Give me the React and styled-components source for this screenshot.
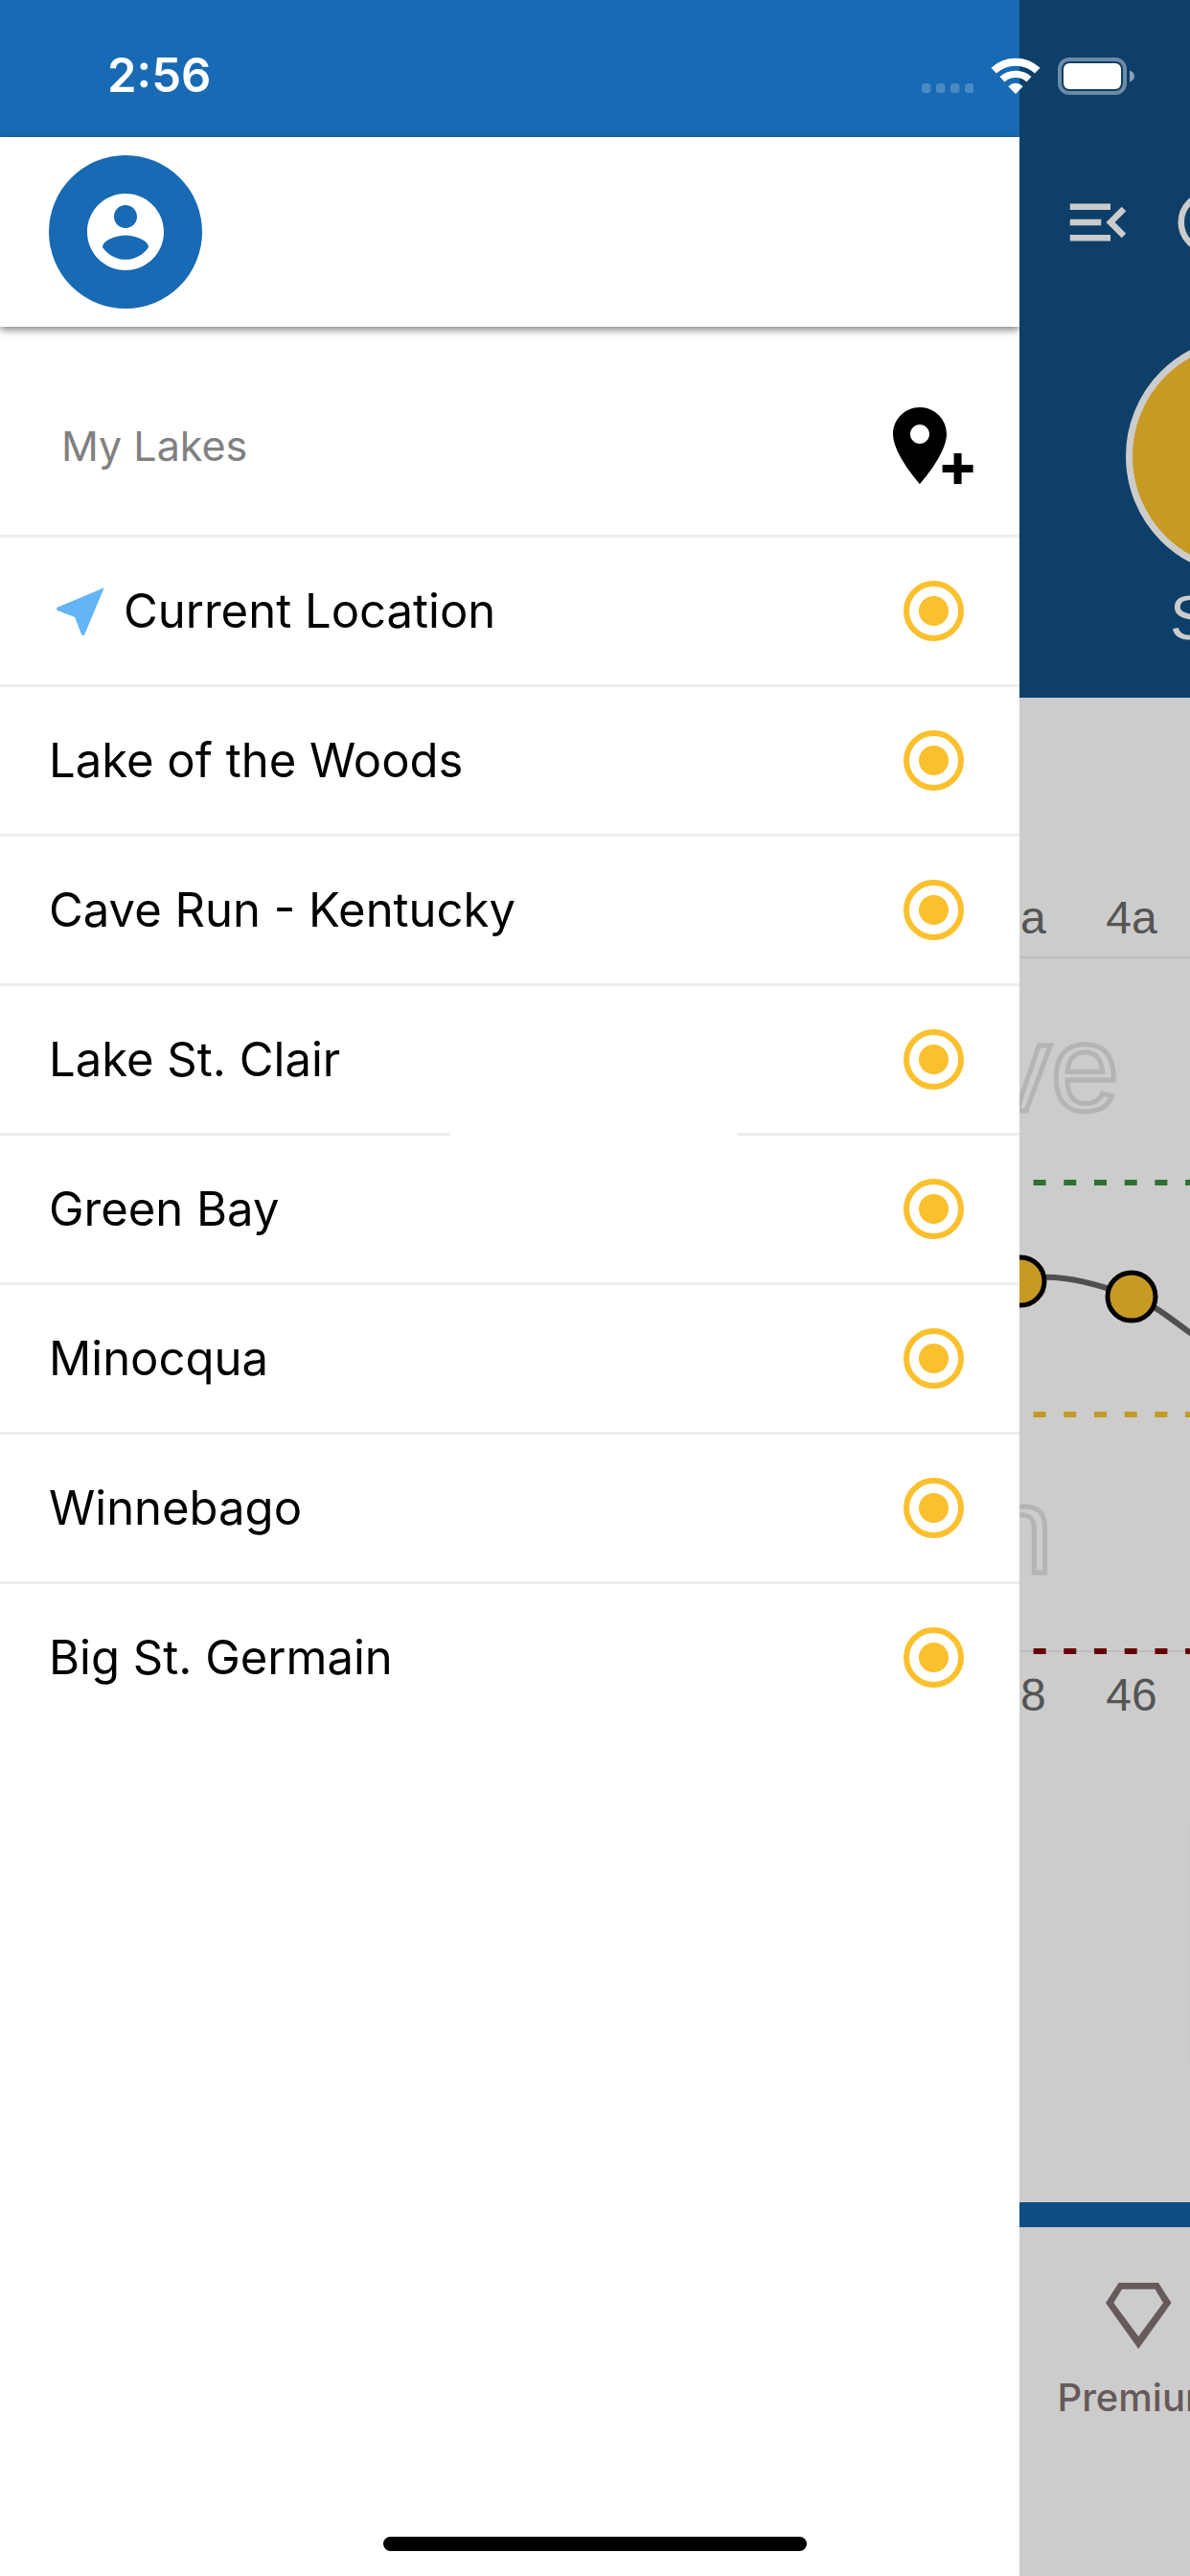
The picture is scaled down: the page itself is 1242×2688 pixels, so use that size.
import styled, { createGlobalStyle } from "styled-components";

const GlobalStyle = createGlobalStyle`
  * {
    box-sizing: border-box;
  }

  body {
    margin: 0;
    background: #ffffff;
    font-family: Inter, "Liberation Sans", sans-serif;
  }
`;

const Screen = styled.div`
  position: relative;
  display: grid;
  grid-template-columns: minmax(0, 1fr) 178px;
  min-height: 100vh;
  overflow: hidden;
`;

const StatusBar = styled.div`
  position: absolute;
  top: 0;
  left: 0;
  right: 0;
  z-index: 2;
  display: flex;
  align-items: center;
  justify-content: space-between;
  height: 143px;
  padding: 15px 57px 0 112px;
  color: #ffffff;
`;

const Time = styled.time`
  font-size: 49px;
  line-height: 60px;
  font-weight: 600;
`;

const StatusIcons = styled.div`
  display: flex;
  align-items: center;
  gap: 18px;
`;

const HomeIndicator = styled.div`
  position: absolute;
  bottom: 26px;
  left: 50%;
  z-index: 2;
  width: 442px;
  height: 15px;
  margin-left: -221px;
  border-radius: 8px;
  background: #000000;
`;

const Drawer = styled.aside`
  display: flex;
  flex-direction: column;
  overflow: hidden;
  background: #ffffff;
`;

const DrawerTop = styled.div`
  height: 143px;
  background: #176ab3;
`;

const DrawerHeader = styled.header`
  padding: 19px 51px;
  background: #ffffff;
  box-shadow: 0 3px 8px rgba(0, 0, 0, 0.5);
`;

const AvatarButton = styled.button`
  display: flex;
  align-items: center;
  justify-content: center;
  width: 160px;
  height: 160px;
  padding: 0;
  border: none;
  border-radius: 50%;
  background: #176ab3;
  color: #ffffff;
`;

const LakesHeading = styled.div`
  display: flex;
  align-items: center;
  justify-content: space-between;
  height: 217px;
  padding: 30px 48px 0 64px;
`;

const LakesTitle = styled.h2`
  margin: 0;
  font-size: 43px;
  line-height: 60px;
  font-weight: 400;
  color: #808080;
`;

const IconButton = styled.button`
  display: flex;
  padding: 0;
  border: none;
  background: none;
  color: ${(props) => props.$color || "#000000"};
`;

const LakeList = styled.ul`
  margin: 0;
  padding: 0;
  list-style: none;
`;

const LakeItem = styled.li`
  position: relative;
  border-top: 3px solid #ededed;
`;

const LakeLabel = styled.label`
  display: flex;
  align-items: center;
  gap: 12px;
  height: 153px;
  padding: 0 58px 0 51px;
  color: #000000;
`;

const LakeName = styled.span`
  flex: 1;
  font-size: 49px;
  line-height: 60px;
`;

const LakeRadio = styled.input`
  appearance: none;
  width: 63px;
  height: 63px;
  margin: 0;
  border: 6px solid #fbc02d;
  border-radius: 50%;

  &:checked {
    background: radial-gradient(circle, #fbc02d 15px, transparent 16px);
  }
`;

const Hud = styled.div`
  position: absolute;
  top: -3px;
  left: 470px;
  width: 300px;
  height: 3px;
  background: #ffffff;
`;

const Peek = styled.main`
  display: flex;
  flex-direction: column;
  overflow: hidden;
  background: #cccccc;
`;

const Hero = styled.section`
  height: 728px;
  padding-top: 193px;
  background: #0d3f69;
  color: #cccccc;
`;

const Toolbar = styled.div`
  display: flex;
  gap: 38px;
  width: max-content;
  padding-left: 43px;
`;

const Gauge = styled.div`
  width: 250px;
  height: 250px;
  margin: 80px 0 0 111px;
  border: 7px solid #cccccc;
  border-radius: 50%;
  background: #c79a24;
`;

const GaugeLabel = styled.p`
  margin: 8px 0 0 157px;
  font-family: "Liberation Sans", Arial, sans-serif;
  font-size: 64px;
  line-height: 72px;
`;

const Chart = styled.svg`
  display: block;
  width: 178px;
  height: 1172px;
  font-family: "Liberation Sans", Arial, sans-serif;
`;

const Card = styled.section`
  width: 300px;
  height: 258px;
  margin-left: 176px;
  border-radius: 6px;
  background: #c8c8c8;
`;

const Stripe = styled.div`
  height: 26px;
  margin-top: auto;
  background: #0f4d84;
`;

const TabBar = styled.nav`
  height: 364px;
  padding: 58px 0 0 38px;
`;

const Tab = styled.a`
  display: flex;
  flex-direction: column;
  align-items: center;
  gap: 28px;
  width: 172px;
  font-size: 40px;
  line-height: 46px;
  font-weight: 500;
  color: #675a5a;
  text-decoration: none;
`;

const lakes = [
  { name: "Current Location", current: true },
  { name: "Lake of the Woods" },
  { name: "Cave Run - Kentucky" },
  { name: "Lake St. Clair" },
  { name: "Green Bay", hud: true },
  { name: "Minocqua" },
  { name: "Winnebago" },
  { name: "Big St. Germain" },
];

const limits = [
  { y: 506, color: "#2e7031" },
  { y: 748, color: "#c49a26" },
  { y: 995, color: "#650005" },
];

const SignalIcon = () => (
  <svg width="54" height="36" viewBox="0 0 54 36" fill="#ffffff" fillOpacity="0.22">
    {[0, 15, 30, 45].map((x) => (
      <rect key={x} x={x} y="26" width="9.5" height="10" rx="3.5" />
    ))}
  </svg>
);

const WifiIcon = () => (
  <svg width="52" height="39" viewBox="0 0 52 39" fill="none" stroke="#ffffff">
    <path d="M3.2 13.6A33.6 33.6 0 0 1 48.8 13.6" strokeWidth="8" />
    <path d="M12 22.8A20.8 20.8 0 0 1 40 22.8" strokeWidth="7.4" />
    <path
      d="M19.4 30.2C23 26.6 29 26.6 32.6 30.2L26 37Z"
      fill="#ffffff"
      strokeWidth="1.6"
      strokeLinejoin="round"
    />
  </svg>
);

const BatteryIcon = () => (
  <svg width="81" height="39" viewBox="0 0 81 39">
    <rect x="2" y="2" width="68" height="35" rx="10" fill="none" stroke="#ffffff" strokeOpacity="0.4" strokeWidth="4" />
    <rect x="6" y="6" width="60" height="27" rx="6" fill="#ffffff" />
    <path d="M75 13.5c3 .8 5 3.2 5 6s-2 5.2-5 6z" fill="#ffffff" fillOpacity="0.5" />
  </svg>
);

const AccountIcon = () => (
  <svg width="96" height="96" viewBox="0 0 24 24" fill="currentColor">
    <path d="M12 2C6.48 2 2 6.48 2 12s4.48 10 10 10 10-4.48 10-10S17.52 2 12 2zm0 3c1.66 0 3 1.34 3 3s-1.34 3-3 3-3-1.34-3-3 1.34-3 3-3zm0 14.2c-2.5 0-4.71-1.28-6-3.22.03-1.99 4-3.08 6-3.08 1.99 0 5.97 1.09 6 3.08-1.29 1.94-3.5 3.22-6 3.22z" />
  </svg>
);

const AddPinIcon = () => (
  <svg width="84" height="80" viewBox="5 2 21 20" fill="currentColor">
    <path d="M12 2C8.13 2 5 5.13 5 9c0 5.25 7 13 7 13s7-7.75 7-13c0-3.87-3.13-7-7-7zm0 9.5c-1.38 0-2.5-1.12-2.5-2.5s1.12-2.5 2.5-2.5 2.5 1.12 2.5 2.5-1.12 2.5-2.5 2.5z" />
    <path d="M20.9 14h2v3h3v2h-3v3h-2v-3h-3v-2h3z" />
  </svg>
);

const NearMeIcon = () => (
  <svg width="66" height="66" viewBox="0 0 24 24" fill="#64b5f6">
    <path d="M21 3L3 10.53v.98l6.84 2.65L12.48 21h.98L21 3z" />
  </svg>
);

const MenuOpenIcon = () => (
  <svg width="78" height="78" viewBox="0 0 24 24" fill="currentColor">
    <path d="M3 18h13v-2H3v2zm0-5h10v-2H3v2zm0-7v2h13V6H3zm18 9.59L17.42 12 21 8.41 19.59 7l-5 5 5 5L21 15.59z" />
  </svg>
);

const CircleIcon = () => (
  <svg width="78" height="78" viewBox="0 0 24 24" fill="none" stroke="currentColor" strokeWidth="2">
    <circle cx="12" cy="12" r="9" />
  </svg>
);

const DiamondIcon = () => (
  <svg width="69" height="69" viewBox="0 0 69 69" fill="currentColor" fillRule="evenodd">
    <path d="M13.7 0H55L68.5 21 34.2 69 0 21ZM17 6.7 8.3 21 34.2 56 60 21 51.5 6.7Z" />
  </svg>
);

const ForecastChart = () => (
  <Chart viewBox="0 0 178 1172" role="img" aria-label="Hourly forecast">
    <g fill="#555555" fontSize="48">
      <text x="1" y="246">a</text>
      <text x="117" y="246" textAnchor="middle">4a</text>
      <text x="1" y="1057">8</text>
      <text x="117" y="1057" textAnchor="middle">46</text>
    </g>
    <path d="M0 271H178M0 995H178" stroke="#bebebe" strokeWidth="2" />
    <g fill="none" stroke="#b4b4b4" strokeWidth="5" fontSize="128" textAnchor="end">
      <text x="104" y="431">ve</text>
      <text x="35" y="913">n</text>
    </g>
    {limits.map((limit) => (
      <path
        key={limit.y}
        d={`M14.6 ${limit.y}H178`}
        stroke={limit.color}
        strokeWidth="6"
        strokeDasharray="13 18.7"
      />
    ))}
    <path
      d="M1 609C26 600 66 606 117 625C141 633 156 647 180 664"
      fill="none"
      stroke="#505050"
      strokeWidth="6"
    />
    <g fill="#c79a24" stroke="#000000" strokeWidth="5">
      <circle cx="1" cy="609" r="25" />
      <circle cx="117" cy="625" r="25" />
    </g>
  </Chart>
);

const App = () => {
  return (
    <>
      <GlobalStyle />
      <Screen>
        <StatusBar>
          <Time>2:56</Time>
          <StatusIcons>
            <SignalIcon />
            <WifiIcon />
            <BatteryIcon />
          </StatusIcons>
        </StatusBar>

        <Drawer>
          <DrawerTop />
          <DrawerHeader>
            <AvatarButton aria-label="Account">
              <AccountIcon />
            </AvatarButton>
          </DrawerHeader>
          <LakesHeading>
            <LakesTitle>My Lakes</LakesTitle>
            <IconButton aria-label="Add lake">
              <AddPinIcon />
            </IconButton>
          </LakesHeading>
          <LakeList>
            {lakes.map((lake, index) => (
              <LakeItem key={lake.name}>
                {lake.hud && <Hud />}
                <LakeLabel htmlFor={`lake-${index}`}>
                  {lake.current && <NearMeIcon />}
                  <LakeName>{lake.name}</LakeName>
                  <LakeRadio type="radio" id={`lake-${index}`} name={`lake-${index}`} defaultChecked />
                </LakeLabel>
              </LakeItem>
            ))}
          </LakeList>
        </Drawer>

        <Peek>
          <Hero>
            <Toolbar>
              <IconButton $color="#cccccc" aria-label="Close menu">
                <MenuOpenIcon />
              </IconButton>
              <IconButton $color="#cccccc" aria-label="Info">
                <CircleIcon />
              </IconButton>
            </Toolbar>
            <Gauge />
            <GaugeLabel>S</GaugeLabel>
          </Hero>
          <ForecastChart />
          <Card />
          <Stripe />
          <TabBar>
            <Tab href="#premium">
              <DiamondIcon />
              Premium
            </Tab>
          </TabBar>
        </Peek>

        <HomeIndicator />
      </Screen>
    </>
  );
};

export default App;
